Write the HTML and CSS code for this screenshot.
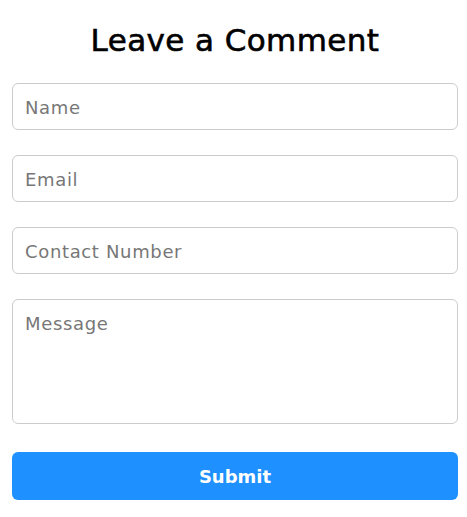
FILE: index.html
```html
<!DOCTYPE html>
<html>
<head>
<meta charset="utf-8">
<link rel="stylesheet" href="styles.css">
</head>
<body>
<form class="comment-form">
  <h1 class="title">Leave a Comment</h1>
  <input class="field" type="text" placeholder="Name">
  <input class="field" type="email" placeholder="Email">
  <input class="field" type="text" placeholder="Contact Number">
  <textarea class="field field-area" placeholder="Message"></textarea>
  <button class="submit" type="button">Submit</button>
</form>
</body>
</html>
```
FILE: styles.css
```css
* { box-sizing: border-box; }
body {
  margin: 0;
  background: #fff;
  font-family: "DejaVu Sans", "Open Sans", sans-serif;
}
.comment-form {
  display: flex;
  flex-direction: column;
  padding: 0 9px 0 12px;
}
.title {
  margin: 20px 0 24px;
  height: 39px;
  line-height: 40px;
  font-size: 31px;
  font-weight: 500;
  letter-spacing: 0.4px;
  -webkit-text-stroke: 0.6px #000;
  text-align: center;
  color: #000;
}
.field {
  display: block;
  width: 100%;
  height: 47px;
  margin: 0 0 25px;
  padding: 2px 12px 0;
  border: 1px solid #ccc;
  border-radius: 6px;
  font-family: inherit;
  font-size: 18px;
  letter-spacing: 0.65px;
  color: #333;
  background: #fff;
  outline: none;
}
.field::placeholder { color: #777; }
.field-area {
  height: 125px;
  padding: 13px 12px;
  resize: none;
  margin-bottom: 28px;
}
.submit {
  height: 48px;
  border: 0;
  border-radius: 6px;
  background: #1e90ff;
  color: #fff;
  font-family: inherit;
  font-size: 18px;
  font-weight: bold;
}
```
